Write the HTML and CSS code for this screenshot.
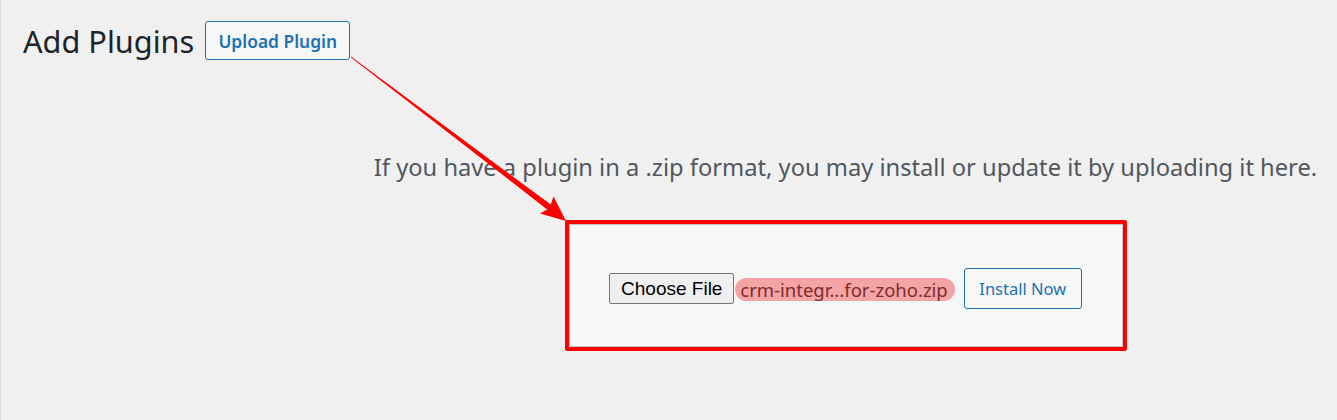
FILE: index.html
```html
<!DOCTYPE html>
<html>
<head>
<meta charset="utf-8">
<link rel="stylesheet" href="styles.css">
</head>
<body>
<div class="page">
  <div class="header">
    <h1 class="title">Add Plugins</h1>
    <button class="upload-btn">Upload Plugin</button>
  </div>
  <div class="upload-section">
    <p class="install-help">If you have a plugin in a .zip format, you may install or update it by uploading it here.</p>
    <div class="upload-box">
      <button class="choose-btn">Choose File</button>
      <span class="filename">crm-integr...for-zoho.zip</span>
      <button class="install-btn">Install Now</button>
    </div>
  </div>
  <svg class="arrow" width="1337" height="420" viewBox="0 0 1337 420">
    <polygon fill="#ff0000" points="351,56.6 550.8,204.6 553.5,196.5 566,221 540,213.5 547.2,209.4 351,57.6"/>
  </svg>
</div>
</body>
</html>
```

FILE: styles.css
```css
html, body {
  margin: 0;
  padding: 0;
  background: #f0f0f1;
}
body {
  font-family: "Noto Sans", "Open Sans", sans-serif;
}
.page {
  position: relative;
  height: 420px;
  border-left: 1px solid #e0e0e0;
  box-sizing: border-box;
  overflow: hidden;
}
.header {
  display: flex;
  align-items: center;
  gap: 11px;
  padding: 21px 0 0 22px;
}
.title {
  margin: 0;
  font-size: 30.7px;
  font-weight: 400;
  color: #1d2327;
  line-height: 38px;
}
.upload-btn {
  height: 39px;
  width: 145px;
  padding: 0;
  font-family: inherit;
  font-size: 17.4px;
  font-weight: 600;
  color: #2271b1;
  background: #f6f7f7;
  border: 1px solid #2271b1;
  border-radius: 3px;
}
.upload-section {
  padding-left: 353px;
  display: flex;
  flex-direction: column;
  align-items: center;
}
.install-help {
  margin: 91px 0 0;
  font-size: 23.7px;
  line-height: 32px;
  color: #50575e;
}
.upload-box {
  margin-top: 37px;
  width: 562px;
  height: 131px;
  box-sizing: border-box;
  border: 4px solid #ff0000;
  border-radius: 2px;
  box-shadow: inset 0 0 0 1px #c3c4c7;
  background: #f6f7f7;
  display: flex;
  align-items: center;
  justify-content: center;
  padding: 4px 0 0 0;
}
.choose-btn {
  height: 31px;
  width: 125px;
  padding: 0;
  font-family: "Liberation Sans", Arial, sans-serif;
  font-size: 19px;
  color: #000;
  background: #efefef;
  border: 1px solid #767676;
  border-radius: 2px;
  margin-top: 2px;
}
.filename {
  margin-left: 1px;
  padding: 0 7px 0 5px;
  font-size: 18.5px;
  line-height: 23px;
  color: #7d2b2f;
  background: #f4a4a4;
  border-radius: 12px;
  margin-top: 3px;
}
.install-btn {
  margin-left: 9px;
  height: 41px;
  width: 118px;
  padding: 0;
  font-family: inherit;
  font-size: 16.5px;
  color: #2271b1;
  background: #f6f7f7;
  border: 1px solid #2271b1;
  border-radius: 3px;
  margin-top: 2px;
}
.arrow {
  position: absolute;
  left: -1px;
  top: 0;
  pointer-events: none;
}
```
